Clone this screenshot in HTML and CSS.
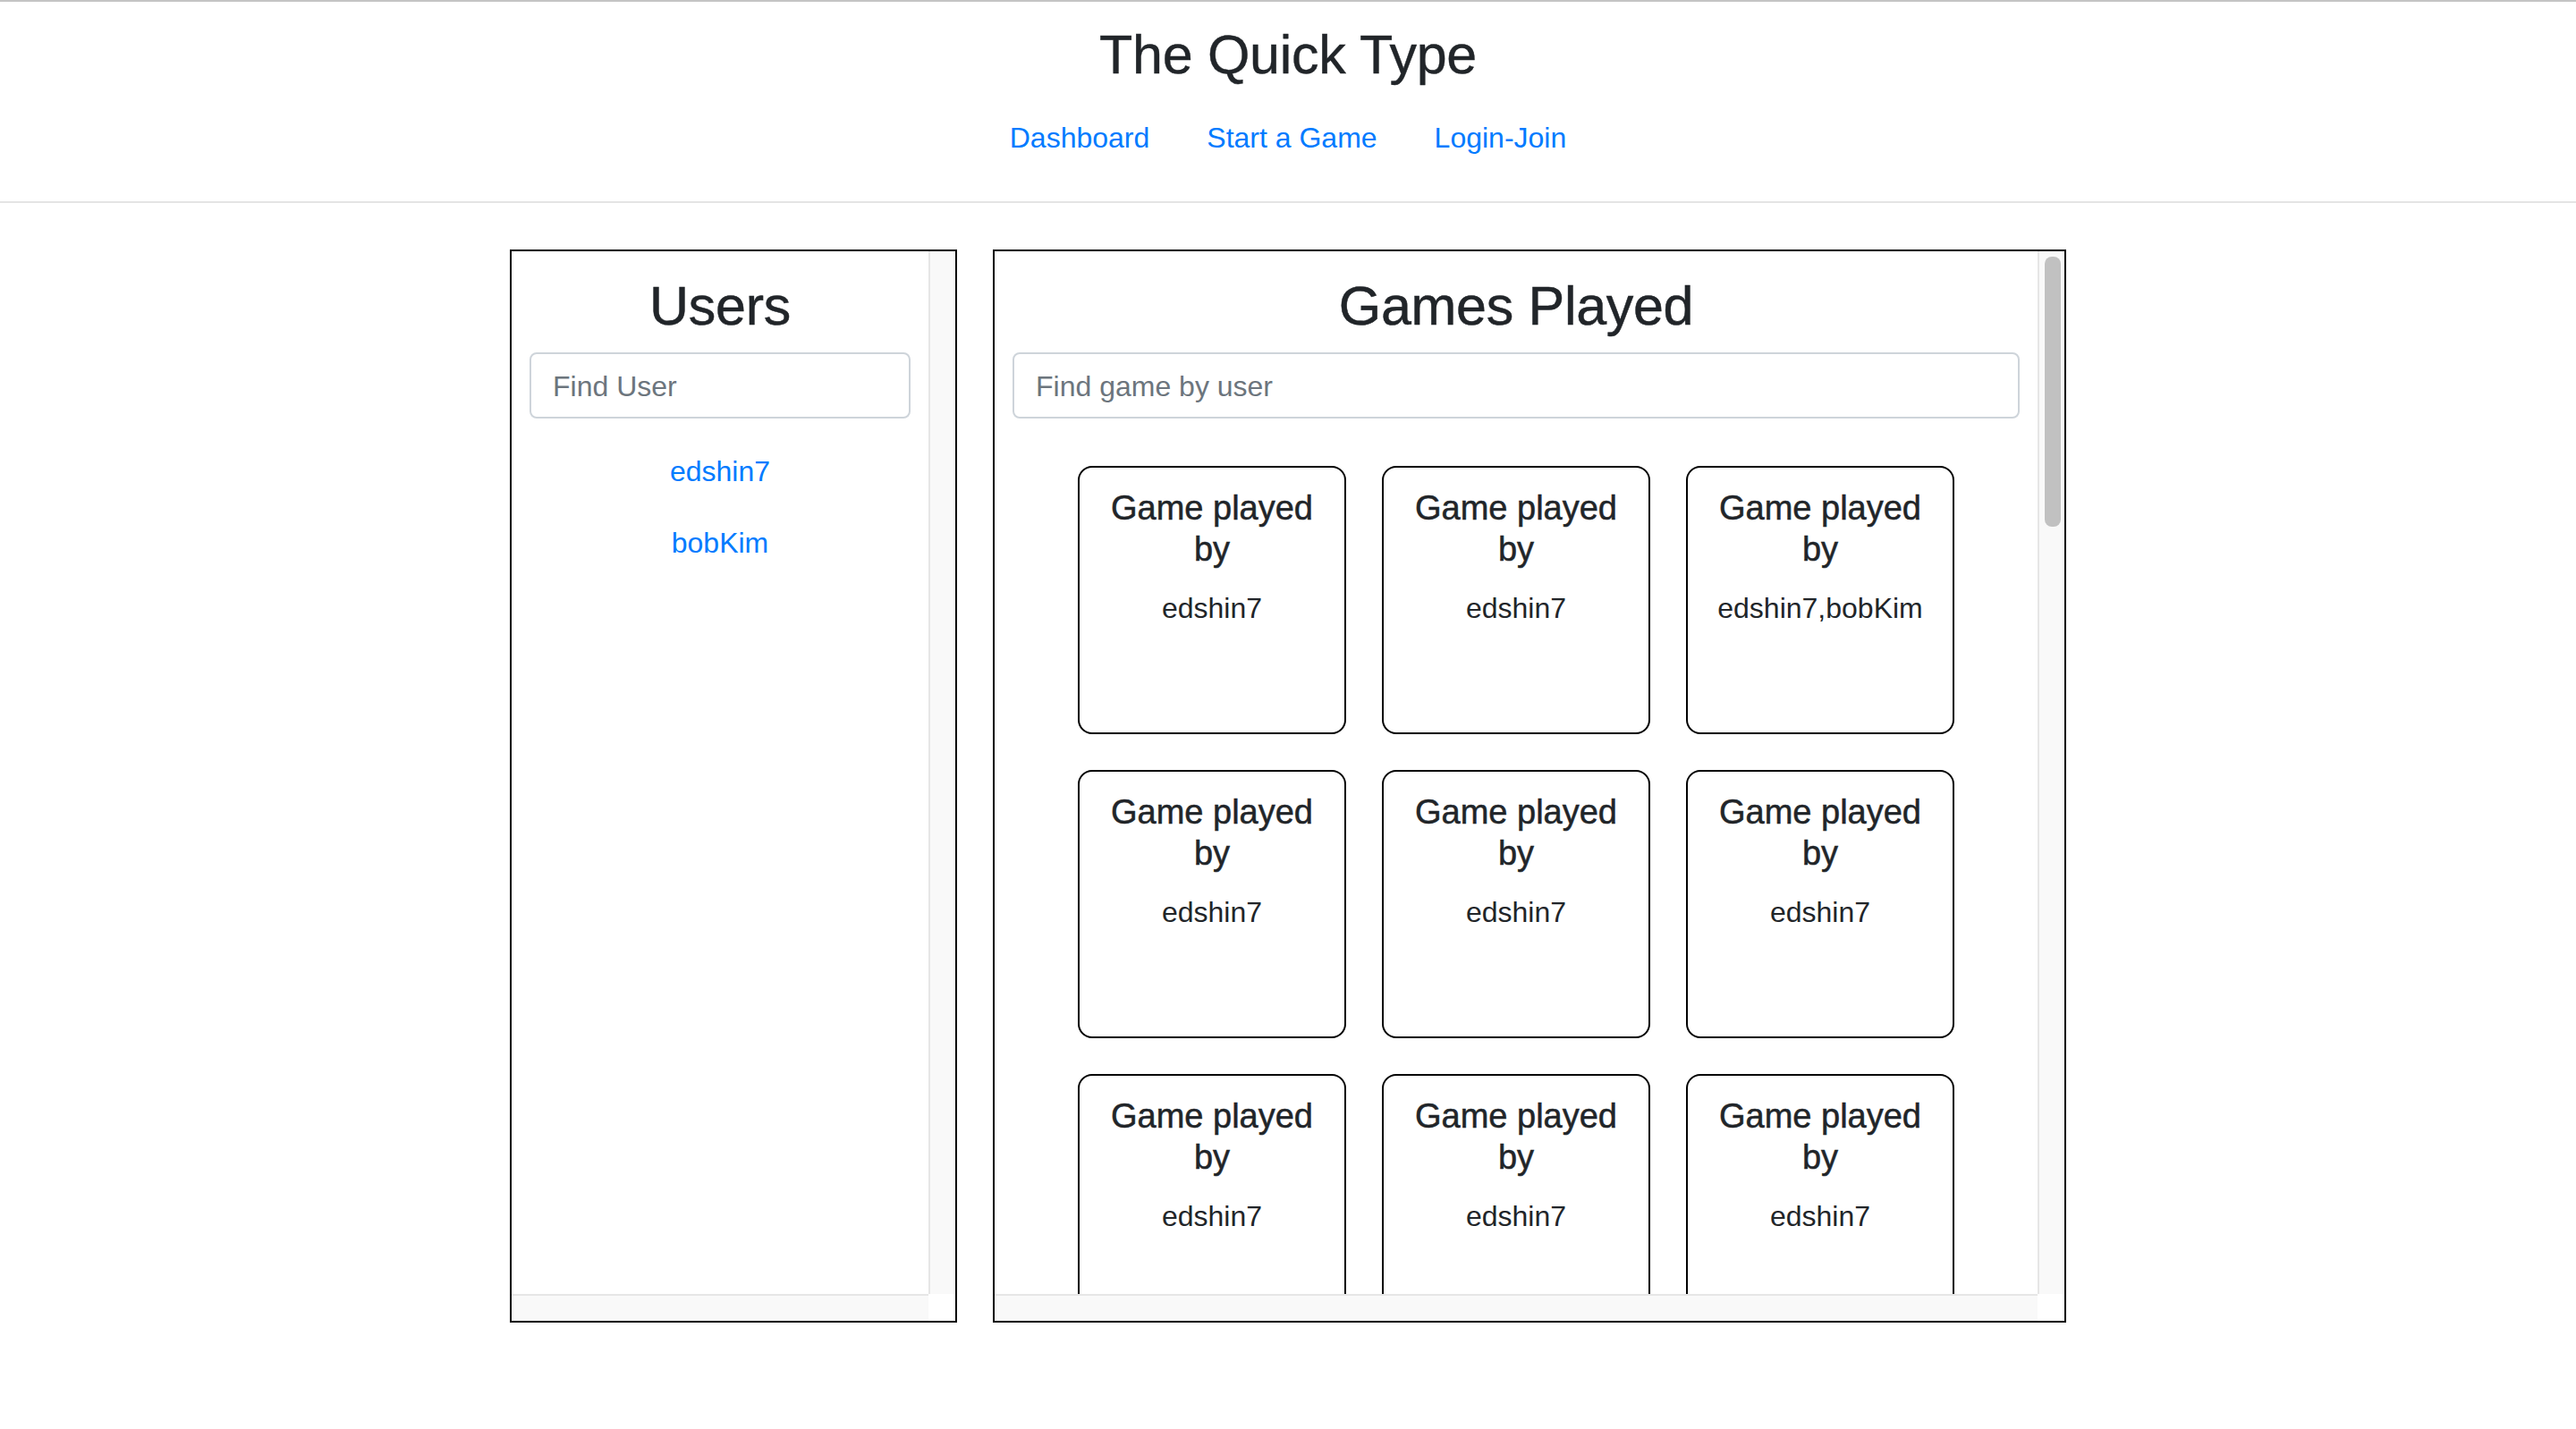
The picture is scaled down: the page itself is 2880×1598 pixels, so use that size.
FILE: index.html
```html
<!DOCTYPE html>
<html lang="en">
<head>
<meta charset="utf-8">
<title>The Quick Type</title>
<link rel="stylesheet" href="styles.css">
</head>
<body>
<header class="site-header">
  <h1 class="site-title">The Quick Type</h1>
  <nav class="site-nav">
    <a class="nav-link" href="#">Dashboard</a>
    <a class="nav-link" href="#">Start a Game</a>
    <a class="nav-link" href="#">Login-Join</a>
  </nav>
</header>
<main class="dashboard">
  <section class="panel panel-users">
    <div class="panel-body">
      <h2 class="panel-title">Users</h2>
      <input class="search" type="text" placeholder="Find User">
      <ul class="user-list">
        <li><a class="user-link" href="#">edshin7</a></li>
        <li><a class="user-link" href="#">bobKim</a></li>
      </ul>
    </div>
    <div class="track track-v"></div>
    <div class="track track-h"></div>
    <div class="track-corner"></div>
  </section>
  <section class="panel panel-games">
    <div class="panel-body">
      <h2 class="panel-title">Games Played</h2>
      <input class="search search-games" type="text" placeholder="Find game by user">
      <div class="game-grid">
        <div class="game-card"><h5 class="game-title">Game played by</h5><p class="game-players">edshin7</p></div>
        <div class="game-card"><h5 class="game-title">Game played by</h5><p class="game-players">edshin7</p></div>
        <div class="game-card"><h5 class="game-title">Game played by</h5><p class="game-players">edshin7,bobKim</p></div>
        <div class="game-card"><h5 class="game-title">Game played by</h5><p class="game-players">edshin7</p></div>
        <div class="game-card"><h5 class="game-title">Game played by</h5><p class="game-players">edshin7</p></div>
        <div class="game-card"><h5 class="game-title">Game played by</h5><p class="game-players">edshin7</p></div>
        <div class="game-card"><h5 class="game-title">Game played by</h5><p class="game-players">edshin7</p></div>
        <div class="game-card"><h5 class="game-title">Game played by</h5><p class="game-players">edshin7</p></div>
        <div class="game-card"><h5 class="game-title">Game played by</h5><p class="game-players">edshin7</p></div>
      </div>
    </div>
    <div class="track track-v"><div class="thumb-v"></div></div>
    <div class="track track-h"></div>
    <div class="track-corner"></div>
  </section>
</main>
</body>
</html>
```

FILE: styles.css
```css
* {
  box-sizing: border-box;
}

html, body {
  margin: 0;
  padding: 0;
  background: #ffffff;
}

body {
  font-family: "Liberation Sans", Arial, Helvetica, sans-serif;
  font-size: 32px;
  line-height: 48px;
  color: #212529;
}

a {
  color: #007bff;
  text-decoration: none;
}

.site-header {
  border-top: 2px solid #c4c4c4;
  border-bottom: 2px solid #e4e4e4;
  padding: 22px 0 31px;
  text-align: center;
}

.site-title {
  margin: 0 0 16px;
  font-size: 61px;
  line-height: 74px;
  font-weight: 400;
  letter-spacing: -0.3px;
  -webkit-text-stroke: 0.4px #212529;
}

.site-nav {
  display: flex;
  justify-content: center;
}

.nav-link {
  display: block;
  padding: 16px 32px;
}

.dashboard {
  display: flex;
  justify-content: center;
  gap: 40px;
  padding-top: 52px;
}

.panel {
  height: 1200px;
  border: 2px solid #000000;
  display: grid;
  grid-template-columns: minmax(0, 1fr) 30px;
  grid-template-rows: minmax(0, 1fr) 30px;
}

.panel-users {
  width: 500px;
}

.panel-games {
  width: 1200px;
}

.panel-body {
  overflow: hidden;
  padding: 24px 20px 20px;
}

.track {
  background: #f9f9f9;
}

.track-v {
  border-left: 2px solid #e6e6e6;
  padding: 6px 4px 0 6px;
}

.track-h {
  border-top: 2px solid #e6e6e6;
}

.track-corner {
  background: #ffffff;
}

.thumb-v {
  height: 302px;
  background: #c1c1c1;
  border-radius: 8px;
}

.panel-title {
  margin: 0 0 15px;
  text-align: center;
  font-size: 61px;
  line-height: 74px;
  font-weight: 400;
  letter-spacing: -0.3px;
  -webkit-text-stroke: 0.5px #212529;
}

.search {
  display: block;
  width: 100%;
  height: 74px;
  margin: 0 0 19px;
  padding: 3px 24px 0;
  border: 2px solid #ced4da;
  border-radius: 8px;
  font-family: inherit;
  font-size: 32px;
  line-height: 48px;
  color: #495057;
  background: #ffffff;
  outline: none;
}

.search::placeholder {
  color: #6c757d;
  opacity: 1;
}

.user-list {
  list-style: none;
  margin: 0;
  padding: 0;
}

.user-link {
  display: block;
  padding: 16px 32px;
  text-align: center;
}

.game-grid {
  display: grid;
  grid-template-columns: repeat(3, 300px);
  grid-auto-rows: 300px;
  gap: 40px;
  justify-content: center;
  margin-top: 53px;
}

.search-games {
  margin-bottom: 0;
}

.game-card {
  border: 2px solid #000000;
  border-radius: 16px;
  padding: 22px 20px 20px;
  text-align: center;
}

.game-title {
  margin: 0 0 19px;
  font-size: 38px;
  line-height: 46px;
  font-weight: 400;
  -webkit-text-stroke: 0.5px #212529;
}

.game-players {
  margin: 0;
  font-size: 32px;
  line-height: 48px;
}
```
